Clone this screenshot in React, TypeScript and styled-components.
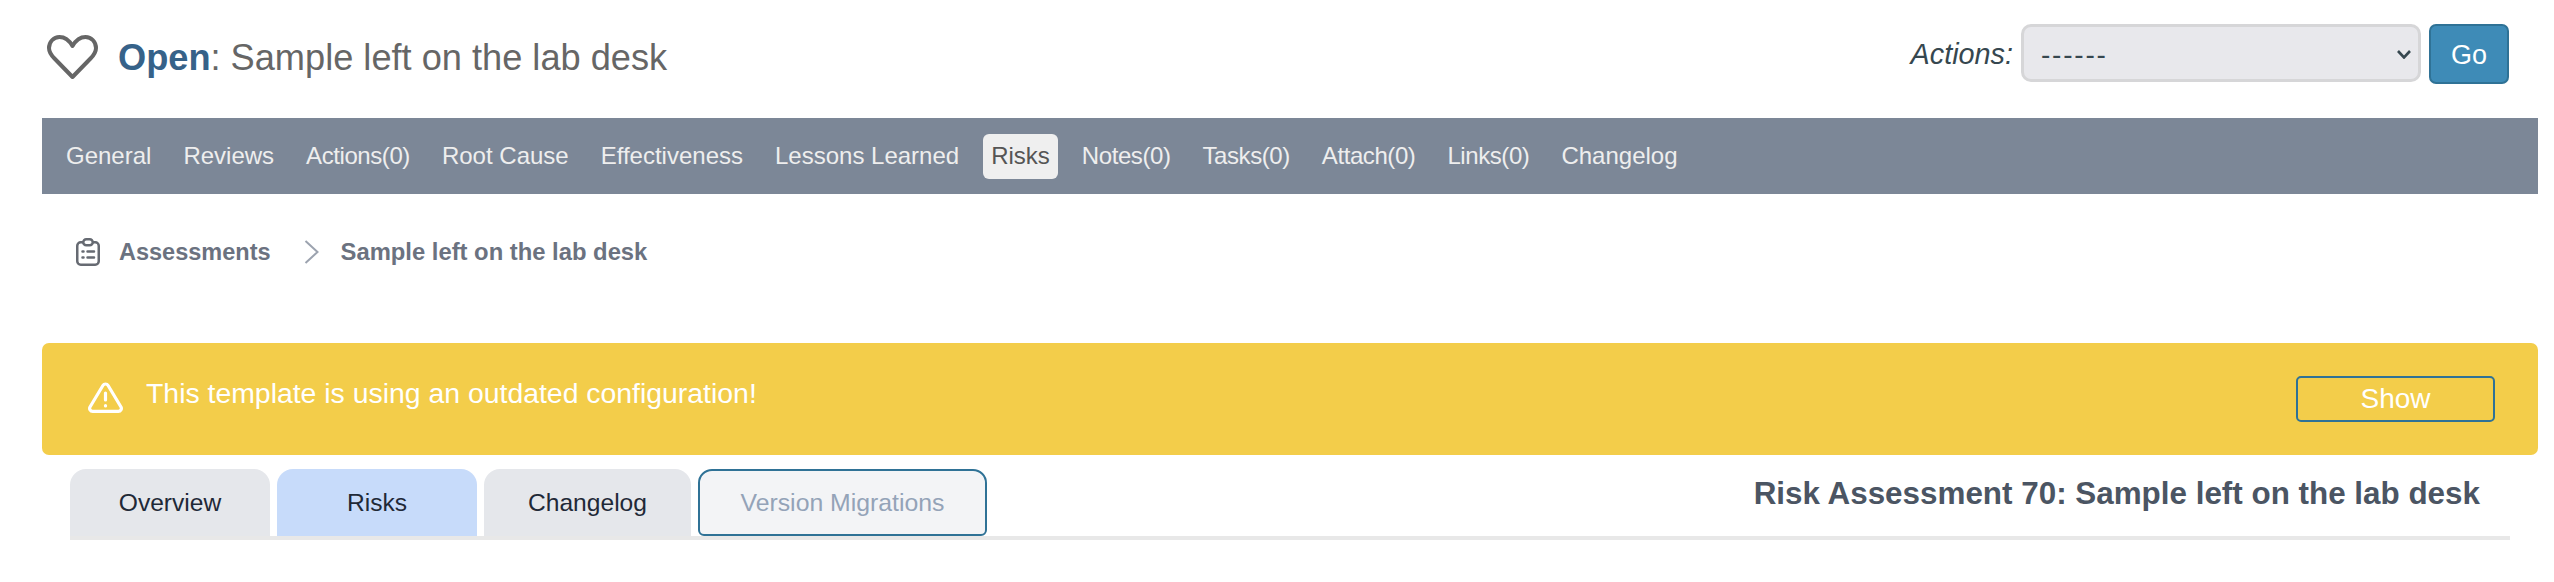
import { createGlobalStyle } from 'styled-components';
import styled from 'styled-components';

const GlobalStyle = createGlobalStyle`
    * {
        box-sizing: border-box;
    }
    body {
        margin: 0;
        background: #ffffff;
        font-family: 'Liberation Sans', Arial, sans-serif;
    }
`;

const NAV_ITEMS = [
    'General',
    'Reviews',
    'Actions(0)',
    'Root Cause',
    'Effectiveness',
    'Lessons Learned',
    'Risks',
    'Notes(0)',
    'Tasks(0)',
    'Attach(0)',
    'Links(0)',
    'Changelog',
];

const HeartIcon = () => (
    <svg width="51" height="44" viewBox="0 0 51 44" fill="none">
        <path
            d="M25.5 11 C22 5 17 2 12.5 2 C6.5 2 2 7 2 13 C2 17.5 4.5 20.5 7.5 23.5 L25.5 42 L43.5 23.5 C46.5 20.5 49 17.5 49 13 C49 7 44.5 2 38.5 2 C34 2 29 5 25.5 11 Z"
            stroke="#666666"
            strokeWidth="4"
            strokeLinejoin="round"
        />
    </svg>
);

const ClipboardIcon = () => (
    <svg width="24" height="28" viewBox="0 0 24 28" fill="none" stroke="#666a72" strokeWidth="2.5">
        <rect x="1.25" y="4.25" width="21.5" height="22.5" rx="3.5" />
        <rect x="7.25" y="1.25" width="9.5" height="6" rx="3" fill="#ffffff" />
        <path d="M6.5 13.5 H7.5 M11.5 13.5 H18 M6.5 19.5 H7.5 M11.5 19.5 H18" strokeLinecap="round" />
    </svg>
);

const ChevronIcon = () => (
    <svg width="15" height="24" viewBox="0 0 15 24" fill="none">
        <path d="M1.5 1 L13.5 12 L1.5 23" stroke="#9ca3af" strokeWidth="2" />
    </svg>
);

const WarningIcon = () => (
    <svg width="35" height="31" viewBox="0 0 35 31" fill="none" stroke="#ffffff" strokeWidth="3.2">
        <path
            d="M14.9 3.5 a3 3 0 0 1 5.2 0 L33 25 a3 3 0 0 1 -2.6 4.4 H4.6 a3 3 0 0 1 -2.6 -4.4 Z"
            strokeLinejoin="round"
        />
        <path d="M17.5 11 V18 M17.5 23.5 V24" strokeLinecap="round" />
    </svg>
);

const SelectArrow = () => (
    <svg width="14" height="9" viewBox="0 0 14 9" fill="none">
        <path d="M1 1 L7 7.5 L13 1" stroke="#36474f" strokeWidth="2.6" />
    </svg>
);

const App = () => {
    return (
        <Page>
            <GlobalStyle />
            <Header>
                <TitleGroup>
                    <HeartIcon />
                    <Title>
                        <Status>Open</Status>: Sample left on the lab desk
                    </Title>
                </TitleGroup>
                <ActionsForm>
                    <ActionsLabel>Actions:</ActionsLabel>
                    <SelectWrap>
                        <ActionsSelect defaultValue="------">
                            <option>------</option>
                        </ActionsSelect>
                        <ArrowSlot>
                            <SelectArrow />
                        </ArrowSlot>
                    </SelectWrap>
                    <GoButton>Go</GoButton>
                </ActionsForm>
            </Header>

            <NavBar>
                {NAV_ITEMS.map((item) => (
                    <NavItem key={item} $active={item === 'Risks'} $tight={item.includes('(')}>
                        {item}
                    </NavItem>
                ))}
            </NavBar>

            <Breadcrumb>
                <ClipboardIcon />
                <Crumb>Assessments</Crumb>
                <ChevronIcon />
                <CurrentCrumb>Sample left on the lab desk</CurrentCrumb>
            </Breadcrumb>

            <Alert>
                <AlertMessage>
                    <WarningIcon />
                    <AlertText>This template is using an outdated configuration!</AlertText>
                </AlertMessage>
                <ShowButton>Show</ShowButton>
            </Alert>

            <TabBar>
                <Tabs>
                    <Tab $width={200}>Overview</Tab>
                    <Tab $width={200} $selected>
                        Risks
                    </Tab>
                    <Tab $width={207}>Changelog</Tab>
                    <MigrationTab>Version Migrations</MigrationTab>
                </Tabs>
                <AssessmentTitle>Risk Assessment 70: Sample left on the lab desk</AssessmentTitle>
            </TabBar>
        </Page>
    );
};

export default App;

const Page = styled.div`
    width: 2554px;
    height: 582px;
    padding: 24px 16px 0 42px;
    overflow: hidden;
`;

const Header = styled.header`
    display: flex;
    justify-content: space-between;
    align-items: flex-start;
    height: 94px;
    padding-right: 29px;
`;

const TitleGroup = styled.div`
    display: flex;
    align-items: center;
    gap: 20px;
    padding: 10px 0 0 5px;
`;

const Title = styled.h1`
    margin: 3px 0 0;
    font-size: 36.2px;
    line-height: 42px;
    font-weight: 400;
    color: #666666;
`;

const Status = styled.span`
    font-weight: 700;
    color: #366289;
`;

const ActionsForm = styled.div`
    display: flex;
    align-items: flex-start;
    gap: 8px;
`;

const ActionsLabel = styled.span`
    font-size: 28.8px;
    font-style: italic;
    line-height: 60px;
    color: #36474f;
`;

const SelectWrap = styled.div`
    position: relative;
    width: 400px;
    height: 58px;
`;

const ActionsSelect = styled.select`
    appearance: none;
    width: 100%;
    height: 100%;
    padding: 2px 17px 0;
    font-family: inherit;
    font-size: 28px;
    letter-spacing: 1.8px;
    color: #36474f;
    background: #e8e8ec;
    border: 3px solid #d6d6d8;
    border-radius: 10px;
`;

const ArrowSlot = styled.span`
    position: absolute;
    top: 26px;
    right: 10px;
    display: flex;
    pointer-events: none;
`;

const GoButton = styled.button`
    width: 80px;
    height: 60px;
    padding: 2px 0 0;
    font-family: inherit;
    font-size: 27px;
    color: #ffffff;
    background: #3e8bb7;
    border: 2px solid #2f7296;
    border-radius: 7px;
`;

const NavBar = styled.nav`
    display: flex;
    align-items: center;
    gap: 16px;
    height: 76px;
    padding: 0 16px;
    background: #7c8797;
`;

const NavItem = styled.a<{ $active?: boolean; $tight?: boolean }>`
    padding: 0 8px;
    height: 45px;
    display: flex;
    align-items: center;
    font-size: 24px;
    letter-spacing: ${({ $tight }) => ($tight ? '-0.42px' : '0')};
    border-radius: 6px;
    color: ${({ $active }) => ($active ? '#555555' : '#eeeeee')};
    background: ${({ $active }) => ($active ? '#efefef' : 'transparent')};
`;

const Breadcrumb = styled.div`
    display: flex;
    align-items: center;
    height: 30px;
    margin: 43px 0 0 34px;
`;

const Crumb = styled.span`
    margin: 0 33px 0 19px;
    font-size: 23.5px;
    font-weight: 700;
    color: #6b7280;
`;

const CurrentCrumb = styled.span`
    margin-left: 22px;
    font-size: 23.8px;
    font-weight: 700;
    color: #6b7280;
`;

const Alert = styled.div`
    display: flex;
    justify-content: space-between;
    height: 112px;
    margin-top: 76px;
    padding: 33px 43px 0 46px;
    background: #f3cd4a;
    border-radius: 7px;
`;

const AlertMessage = styled.div`
    display: flex;
    gap: 23px;
    padding-top: 6px;
`;

const AlertText = styled.span`
    font-size: 28.4px;
    line-height: 30px;
    margin-top: -4px;
    color: #ffffff;
`;

const ShowButton = styled.button`
    width: 199px;
    height: 46px;
    font-family: inherit;
    font-size: 28px;
    color: #ffffff;
    background: transparent;
    border: 2px solid #2f7296;
    border-radius: 5px;
`;

const TabBar = styled.div`
    display: flex;
    justify-content: space-between;
    height: 71px;
    margin: 14px 28px 0 28px;
    border-bottom: 4px solid #e8e8e8;
`;

const Tabs = styled.div`
    display: flex;
    gap: 7px;
`;

const Tab = styled.button<{ $width: number; $selected?: boolean }>`
    width: ${({ $width }) => $width}px;
    height: 67px;
    font-family: inherit;
    font-size: 24.6px;
    color: #1f2937;
    background: ${({ $selected }) => ($selected ? '#c7dbfa' : '#e5e7eb')};
    border: 0;
    border-radius: 16px 16px 0 0;
`;

const MigrationTab = styled.button`
    width: 289px;
    height: 67px;
    font-family: inherit;
    font-size: 24.8px;
    color: #94a3b8;
    background: #f3f4f6;
    border: 2px solid #2f7296;
    border-radius: 14px 14px 6px 6px;
`;

const AssessmentTitle = styled.h2`
    margin: 7px 30px 0 0;
    font-size: 31.4px;
    line-height: 36px;
    font-weight: 700;
    color: #4b5563;
`;
